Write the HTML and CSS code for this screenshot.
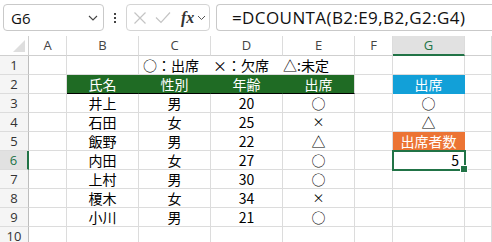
FILE: index.html
```html
<!DOCTYPE html>
<html lang="ja">
<head>
<meta charset="utf-8">
<link rel="stylesheet" href="styles.css">
</head>
<body>
<div class="app">
  <div class="fbar">
    <div class="namebox">
      <span class="nb-text">G6</span>
      <svg class="chev" width="10" height="6" viewBox="0 0 10 6"><path d="M1 1 L5 5 L9 1" fill="none" stroke="#444" stroke-width="1.1"/></svg>
    </div>
    <div class="dots"><i></i><i></i><i></i></div>
    <div class="fxbox">
      <svg width="14" height="14" viewBox="0 0 14 14"><path d="M1.5 1.5 L12.5 12.5 M12.5 1.5 L1.5 12.5" stroke="#c4c4c4" stroke-width="1.2" fill="none"/></svg>
      <svg width="16" height="14" viewBox="0 0 16 14"><path d="M1 6.5 L6 11.5 L15 1.5" stroke="#c4c4c4" stroke-width="1.2" fill="none"/></svg>
      <span class="fx">fx</span>
      <svg width="9" height="6" viewBox="0 0 9 6"><path d="M1 1 L4.5 4.5 L8 1" fill="none" stroke="#555" stroke-width="1"/></svg>
    </div>
    <div class="formula">=DCOUNTA(B2:E9,B2,G2:G4)</div>
  </div>
  <div class="sheet">
    <div class="c corner"><span class="tri"></span></div>
    <div class="c ch">A</div><div class="c ch">B</div><div class="c ch">C</div><div class="c ch">D</div><div class="c ch">E</div><div class="c ch">F</div><div class="c ch sel">G</div><div class="c ch"></div>

    <div class="c rh">1</div><div class="c"></div><div class="c"></div><div class="c legend">○：出席　×：欠席　△:未定</div><div class="c"></div><div class="c"></div><div class="c"></div>

    <div class="c rh">2</div><div class="c"></div><div class="c hd">氏名</div><div class="c hd">性別</div><div class="c hd">年齢</div><div class="c hd last">出席</div><div class="c"></div><div class="c blue">出席</div><div class="c"></div>

    <div class="c rh">3</div><div class="c"></div><div class="c ctr">井上</div><div class="c ctr">男</div><div class="c ctr">20</div><div class="c ctr">○</div><div class="c"></div><div class="c ctr">○</div><div class="c"></div>
    <div class="c rh">4</div><div class="c"></div><div class="c ctr">石田</div><div class="c ctr">女</div><div class="c ctr">25</div><div class="c ctr x">×</div><div class="c"></div><div class="c ctr">△</div><div class="c"></div>
    <div class="c rh">5</div><div class="c"></div><div class="c ctr">飯野</div><div class="c ctr">男</div><div class="c ctr">22</div><div class="c ctr">△</div><div class="c"></div><div class="c orange">出席者数</div><div class="c"></div>
    <div class="c rh rsel">6</div><div class="c"></div><div class="c ctr">内田</div><div class="c ctr">女</div><div class="c ctr">27</div><div class="c ctr">○</div><div class="c"></div><div class="c num active">5<span class="selbox"><span class="handle"></span></span></div><div class="c"></div>
    <div class="c rh">7</div><div class="c"></div><div class="c ctr">上村</div><div class="c ctr">男</div><div class="c ctr">30</div><div class="c ctr">○</div><div class="c"></div><div class="c"></div><div class="c"></div>
    <div class="c rh">8</div><div class="c"></div><div class="c ctr">榎木</div><div class="c ctr">女</div><div class="c ctr">34</div><div class="c ctr x">×</div><div class="c"></div><div class="c"></div><div class="c"></div>
    <div class="c rh">9</div><div class="c"></div><div class="c ctr">小川</div><div class="c ctr">男</div><div class="c ctr">21</div><div class="c ctr">○</div><div class="c"></div><div class="c"></div><div class="c"></div>
    <div class="c rh">10</div><div class="c"></div><div class="c"></div><div class="c"></div><div class="c"></div><div class="c"></div><div class="c"></div><div class="c"></div><div class="c"></div>
  </div>
</div>
</body>
</html>
```
FILE: styles.css
```css
html, body {
  margin: 0;
  padding: 0;
  background: #fff;
  overflow: hidden;
}
.app {
  width: 492px;
  height: 242px;
  overflow: hidden;
  font-family: "Noto Sans CJK JP", sans-serif;
}
.fbar {
  height: 36px;
  display: flex;
  align-items: flex-start;
  padding: 4px 0 0 3px;
  box-sizing: border-box;
  background: #fff;
}
.namebox {
  width: 101px;
  height: 27px;
  box-sizing: border-box;
  border: 1px solid #c9c9c9;
  border-radius: 4px;
  display: flex;
  align-items: center;
  justify-content: space-between;
  padding: 0 5px 0 7px;
}
.nb-text {
  font-family: "Open Sans", sans-serif;
  font-size: 15px;
  color: #111;
}
.dots {
  width: 22px;
  height: 27px;
  display: flex;
  flex-direction: column;
  align-items: center;
  justify-content: center;
  gap: 2px;
}
.dots i {
  width: 2px;
  height: 2px;
  background: #444;
}
.fxbox {
  width: 84px;
  height: 27px;
  box-sizing: border-box;
  border: 1px solid #d4d4d4;
  border-radius: 4px;
  display: flex;
  align-items: center;
  gap: 8px;
  padding-left: 6px;
}
.fx {
  font-family: "Liberation Serif", serif;
  font-style: italic;
  font-weight: bold;
  font-size: 16px;
  color: #333;
  margin-left: 2px;
  margin-right: -5px;
}
.formula {
  margin-left: 6px;
  flex: 1;
  height: 27px;
  box-sizing: border-box;
  border: 1px solid #c9c9c9;
  border-right: none;
  border-radius: 4px 0 0 4px;
  padding-left: 15px;
  font-family: "Open Sans", sans-serif;
  font-size: 17px;
  letter-spacing: 0.4px;
  line-height: 25px;
  color: #111;
  white-space: nowrap;
}
.sheet {
  display: grid;
  grid-template-columns: 29px 38px 72px 72px 72px 72px 38px 72px 1fr;
  grid-template-rows: 20px repeat(9, 19px) 19px;
}
.c {
  box-sizing: border-box;
  border-right: 1px solid #dcdcdc;
  border-bottom: 1px solid #dcdcdc;
  font-size: 14px;
  line-height: 18px;
  color: #000;
  white-space: nowrap;
}
.corner {
  position: relative;
  border-right: 1px solid #cfcfcf;
  border-bottom: 1px solid #cfcfcf;
}
.tri {
  position: absolute;
  right: 3px;
  bottom: 3px;
  width: 0;
  height: 0;
  border-left: 12px solid transparent;
  border-bottom: 12px solid #dedede;
}
.ch {
  font-family: "Open Sans", sans-serif;
  font-size: 13px;
  color: #444;
  text-align: center;
  line-height: 19px;
  border-bottom: 1px solid #cfcfcf;
}
.ch.sel {
  background: #e1e1e1;
  border-bottom: 2px solid #217346;
  color: #217346;
}
.rh {
  font-family: "Open Sans", sans-serif;
  font-size: 13px;
  color: #333;
  text-align: center;
  border-right: 1px solid #bdbdbd;
  background: #f5f5f5;
}
.rh.rsel {
  background: #e1e1e1;
  border-right: 2px solid #217346;
  color: #217346;
}
.legend {
  grid-column: span 3;
  padding-left: 4px;
}
.hd {
  background: #1f6b24;
  color: #fff;
  text-align: center;
  border-right-color: #1f6b24;
  border-bottom: 1px solid #000;
}
.hd.last {
  border-right-color: #dcdcdc;
}
.blue {
  background: #12a0d8;
  color: #fff;
  text-align: center;
  border-right-color: #12a0d8;
  border-bottom-color: #12a0d8;
}
.orange {
  background: #ec7434;
  color: #fff;
  text-align: center;
  border-right-color: #ec7434;
  border-bottom-color: #ec7434;
}
.ctr {
  text-align: center;
}
.x {
  font-size: 12px;
}
.num {
  text-align: right;
  padding-right: 5px;
}
.active {
  position: relative;
}
.selbox {
  position: absolute;
  left: -1px;
  top: -1px;
  right: -2px;
  bottom: -2px;
  border: 2px solid #217346;
}
.handle {
  position: absolute;
  right: -4px;
  bottom: -4px;
  width: 6px;
  height: 6px;
  background: #217346;
  border: 1px solid #fff;
}
```
